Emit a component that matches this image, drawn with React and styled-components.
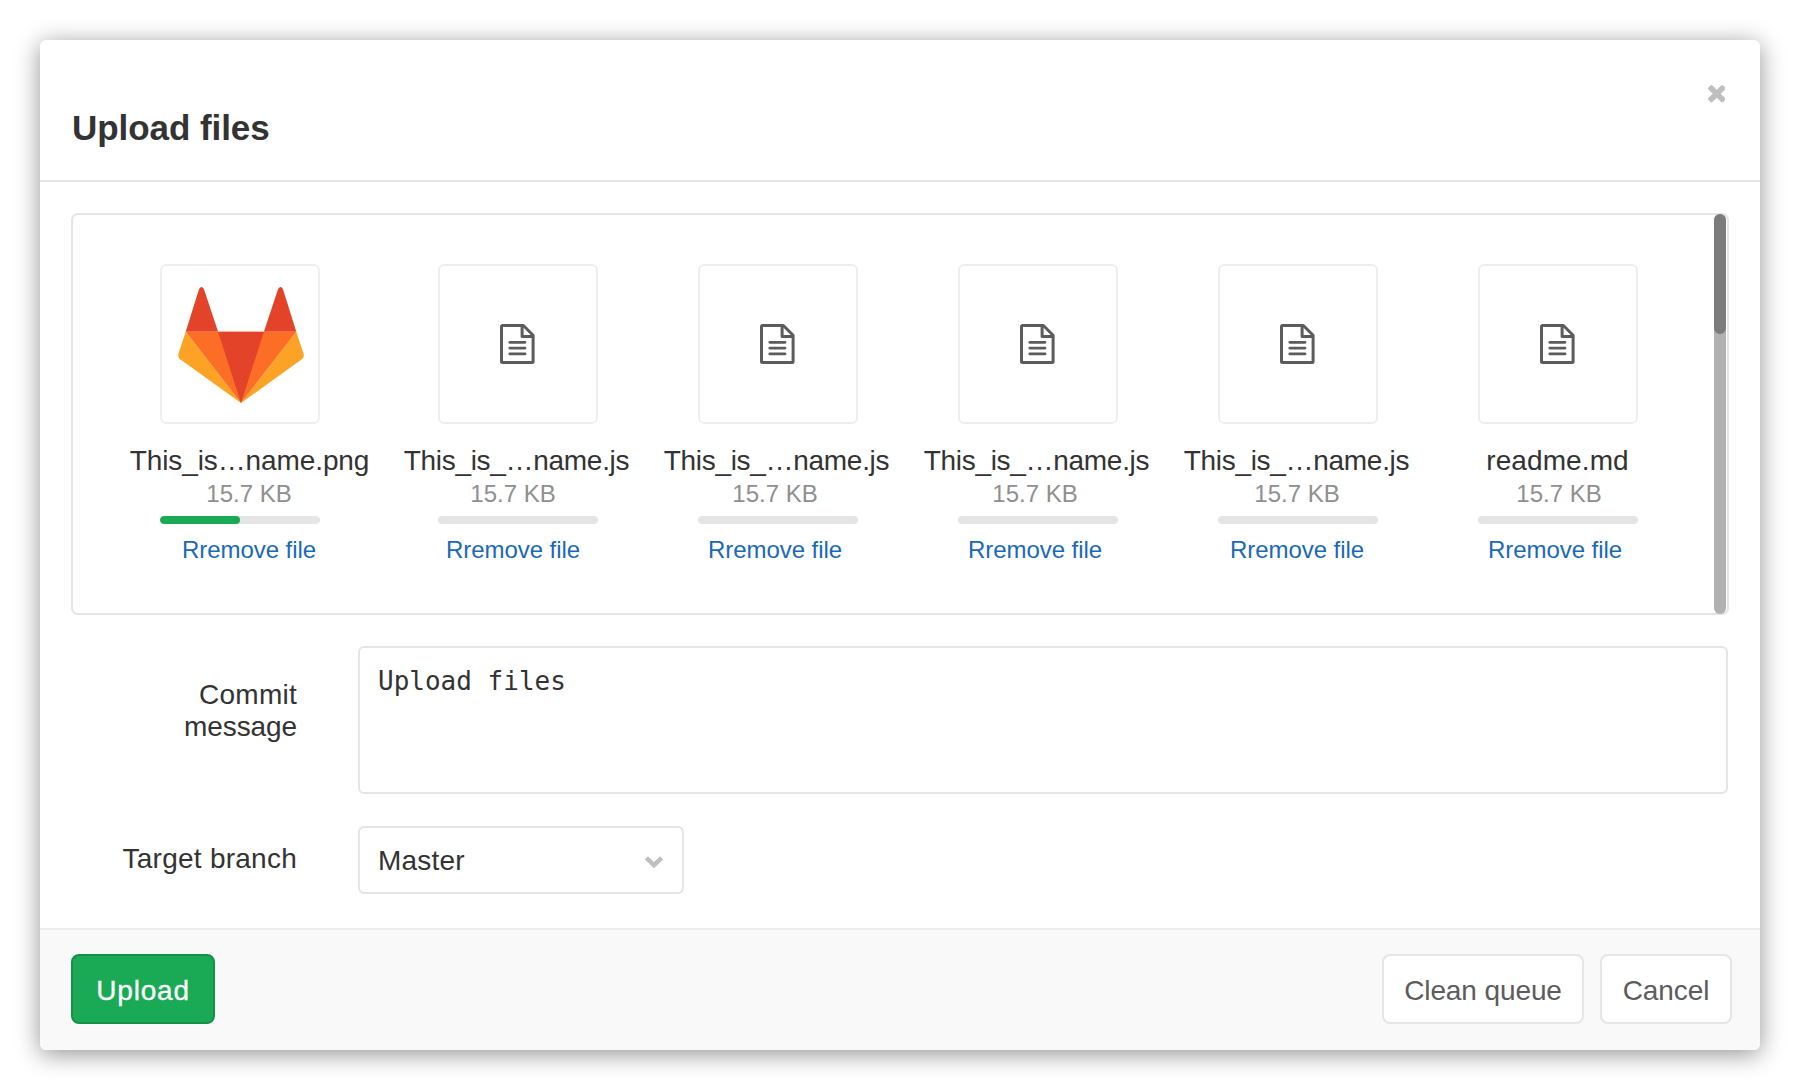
import React from "react";
import styled, { createGlobalStyle } from "styled-components";

const GlobalStyle = createGlobalStyle`
  *, *::before, *::after { box-sizing: border-box; }
  body {
    margin: 0;
    background: #fff;
    color: #333;
    font: 28px/32px "Liberation Sans", Arial, sans-serif;
  }
  button { font: inherit; cursor: pointer; }
  svg { display: block; }
`;

const Page = styled.main`
  height: 1090px;
  padding: 40px;
  overflow: hidden;
`;

const Modal = styled.section`
  display: flex;
  flex-direction: column;
  height: 1010px;
  border-radius: 6px;
  background: #fff;
  overflow: hidden;
  box-shadow: 0 4px 24px rgba(0, 0, 0, 0.43);
`;

const Header = styled.header`
  display: flex;
  justify-content: space-between;
  align-items: flex-start;
  height: 142px;
  padding: 45px 35px 0 32px;
  border-bottom: 2px solid #e5e5e5;
`;

const Title = styled.h1`
  margin: 22px 0 0;
  font-size: 35px;
  line-height: 42px;
  font-weight: 700;
  letter-spacing: -0.06px;
`;

const CloseButton = styled.button`
  padding: 0;
  border: 0;
  background: none;
  color: #bfbfbf;
`;

const Body = styled.div`
  flex: 1;
  padding: 31px 31px 0;
`;

const DropZone = styled.div`
  display: flex;
  justify-content: space-between;
  height: 402px;
  border: 2px solid #e5e5e5;
  border-radius: 7px;
`;

const FileList = styled.ul`
  display: flex;
  margin: 0;
  padding: 49px 0 0 37px;
  list-style: none;
`;

const FileItem = styled.li`
  display: flex;
  flex-direction: column;
  align-items: center;
  width: 260px;
  white-space: nowrap;

  &:first-child { margin-right: 18px; }
`;

const Preview = styled.div`
  display: flex;
  align-items: center;
  justify-content: center;
  width: 160px;
  height: 160px;
  margin-bottom: 21px;
  border: 2px solid #eee;
  border-radius: 6px;
`;

const FileName = styled.div`
  margin-left: ${(p) => p.$shift * 2}px;
  letter-spacing: ${(p) => p.$tracking || 0}px;
`;

const FileSize = styled.div`
  margin-top: 1px;
  margin-left: ${(p) => p.$shift * 2}px;
  font-size: 24px;
  color: #8f8f8f;
`;

const Progress = styled.div`
  width: 160px;
  height: 8px;
  margin: 6px 0 10px;
  border-radius: 4px;
  background: #e5e5e5;
  overflow: hidden;
`;

const ProgressFill = styled.div`
  height: 100%;
  border-radius: 4px;
  background: #1aaa55;
`;

const RemoveLink = styled.a`
  margin-left: ${(p) => p.$shift * 2}px;
  font-size: 24px;
  letter-spacing: -0.05px;
  color: #1b69b6;
  text-decoration: none;
`;

const ScrollTrack = styled.div`
  width: 12px;
  height: 400px;
  margin: -1px 1px 0 0;
  border-radius: 6px;
  background: #b1b1b1;
`;

const ScrollThumb = styled.div`
  height: 120px;
  border-radius: 6px;
  background: #7c7c7c;
`;

const FormRow = styled.div`
  display: flex;
  align-items: flex-start;
  margin-top: ${(p) => p.$gap}px;
`;

const Label = styled.label`
  width: ${(p) => p.$width}px;
  margin-left: ${(p) => 226 - p.$width}px;
  margin-right: 61px;
  padding-top: ${(p) => p.$top}px;
  text-align: right;
  letter-spacing: ${(p) => p.$tracking || 0}px;

  &::first-line { letter-spacing: 0.25px; }
`;

const Message = styled.textarea`
  display: block;
  width: 1370px;
  height: 148px;
  padding: 17px 18px;
  border: 2px solid #e5e5e5;
  border-radius: 6px;
  resize: none;
  outline: none;
  color: #333;
  font: 26px/32px "DejaVu Sans Mono", monospace;
`;

const BranchSelect = styled.button`
  display: flex;
  align-items: center;
  justify-content: space-between;
  width: 326px;
  height: 68px;
  padding: 2px 18px 0;
  border: 2px solid #e5e5e5;
  border-radius: 6px;
  background: #fff;
  color: #333;
  letter-spacing: 0.2px;
`;

const Footer = styled.footer`
  display: flex;
  gap: 16px;
  height: 122px;
  padding: 24px 28px 0 31px;
  border-top: 2px solid #eee;
  background: #f9f9f9;
`;

const Button = styled.button`
  width: ${(p) => p.$width}px;
  height: 70px;
  padding: 3px 0 0;
  border: 2px solid #e5e5e5;
  border-radius: 8px;
  background: #fff;
  color: #5c5c5c;
  letter-spacing: -0.1px;
`;

const PrimaryButton = styled(Button)`
  margin-right: auto;
  border-color: #168f48;
  background: #1aaa55;
  color: #fff;
  letter-spacing: 0.8px;
  -webkit-text-stroke: 0.3px #fff;
`;

function CloseIcon() {
  return (
    <svg width="17.5" height="17.5" viewBox="302 366 1188 1188" fill="currentColor">
      <path d="M1490 1322q0 40-28 68l-136 136q-28 28-68 28t-68-28l-294-294-294 294q-28 28-68 28t-68-28l-136-136q-28-28-28-68t28-68l294-294-294-294q-28-28-28-68t28-68l136-136q28-28 68-28t68 28l294 294 294-294q28-28 68-28t68 28l136 136q28 28 28 68t-28 68l-294 294 294 294q28 28 28 68z" />
    </svg>
  );
}

const DocumentSvg = styled.svg`
  margin-right: 1px;
`;

function DocumentIcon() {
  return (
    <DocumentSvg width="35" height="40" viewBox="0 0 35 40" fill="none" stroke="#5c5c5c" strokeWidth="3" strokeLinejoin="round">
      <path d="M2.5 1.5H23.4L33.1 11.2V37.5a1 1 0 0 1-1 1H2.5a1 1 0 0 1-1-1V2.5a1 1 0 0 1 1-1Z" />
      <path d="M22.1 1.5V12.4H33.1" />
      <path d="M9.8 18.3H25M9.8 24.1H25M9.8 29.9H25" strokeWidth="2.8" strokeLinecap="round" />
    </DocumentSvg>
  );
}

const LogoSvg = styled.svg`
  margin: 1px 0 0 2px;
`;

function FoxLogo() {
  return (
    <LogoSvg width="126" height="116" viewBox="0 0 126 116">
      <path fill="#e24329" d="M7.7 44.8 21.1 1.9q2.4-3.8 4.8 0L40.1 44.8Z" />
      <path fill="#e24329" d="M118.3 44.8 104.9 1.9q-2.4-3.8-4.8 0L85.9 44.8Z" />
      <path fill="#fca326" d="M7.7 44.8 0.4 67q-.8 3.2 1.8 5.3L63 116Z" />
      <path fill="#fca326" d="M118.3 44.8 125.6 67q.8 3.2-1.8 5.3L63 116Z" />
      <path fill="#fc6d26" d="M7.7 44.8H118.3L63 116Z" />
      <path fill="#e24329" d="M40.1 44.8H85.9L63 116Z" />
    </LogoSvg>
  );
}

const ChevronSvg = styled.svg`
  margin-top: 2px;
`;

function ChevronIcon() {
  return (
    <ChevronSvg width="20" height="14" viewBox="0 0 20 14" fill="none" stroke="#bfbfbf" strokeWidth="4.4">
      <path d="M2.4 2.8l7.6 7.4 7.6-7.4" />
    </ChevronSvg>
  );
}

const files = [
  { name: "This_is…name.png", size: "15.7 KB", done: 50, logo: true, shifts: [9.5, 9, 9], tracking: -0.1 },
  { name: "This_is_…name.js", size: "15.7 KB", done: 0, shifts: [-1.5, -5, -5], tracking: -0.3 },
  { name: "This_is_…name.js", size: "15.7 KB", done: 0, shifts: [-1.5, -3, -3], tracking: -0.3 },
  { name: "This_is_…name.js", size: "15.7 KB", done: 0, shifts: [-1.5, -3, -3], tracking: -0.3 },
  { name: "This_is_…name.js", size: "15.7 KB", done: 0, shifts: [-1.5, -1, -1], tracking: -0.3 },
  { name: "readme.md", size: "15.7 KB", done: 0, shifts: [-0.5, 1, -3], tracking: 0.1 },
];

export default function App() {
  return (
    <>
      <GlobalStyle />
      <Page>
        <Modal role="dialog" aria-labelledby="upload-title">
          <Header>
            <Title id="upload-title">Upload files</Title>
            <CloseButton type="button">
              <CloseIcon />
            </CloseButton>
          </Header>
          <Body>
            <DropZone>
              <FileList>
                {files.map((file, i) => (
                  <FileItem key={i}>
                    <Preview>{file.logo ? <FoxLogo /> : <DocumentIcon />}</Preview>
                    <FileName $shift={file.shifts[0]} $tracking={file.tracking}>{file.name}</FileName>
                    <FileSize $shift={file.shifts[1]}>{file.size}</FileSize>
                    <Progress>
                      <ProgressFill style={{ width: `${file.done}%` }} />
                    </Progress>
                    <RemoveLink $shift={file.shifts[2]}>Rremove file</RemoveLink>
                  </FileItem>
                ))}
              </FileList>
              <ScrollTrack>
                <ScrollThumb />
              </ScrollTrack>
            </DropZone>
            <FormRow $gap={31}>
              <Label htmlFor="message" $width={120} $top={33} $tracking={-0.1}>Commit message</Label>
              <Message id="message" defaultValue="Upload files" spellCheck={false} />
            </FormRow>
            <FormRow $gap={32}>
              <Label $width={226} $top={17} $tracking={0.25}>Target branch</Label>
              <BranchSelect type="button">
                Master
                <ChevronIcon />
              </BranchSelect>
            </FormRow>
          </Body>
          <Footer>
            <PrimaryButton type="button" $width={144}>Upload</PrimaryButton>
            <Button type="button" $width={202}>Clean queue</Button>
            <Button type="button" $width={132}>Cancel</Button>
          </Footer>
        </Modal>
      </Page>
    </>
  );
}
